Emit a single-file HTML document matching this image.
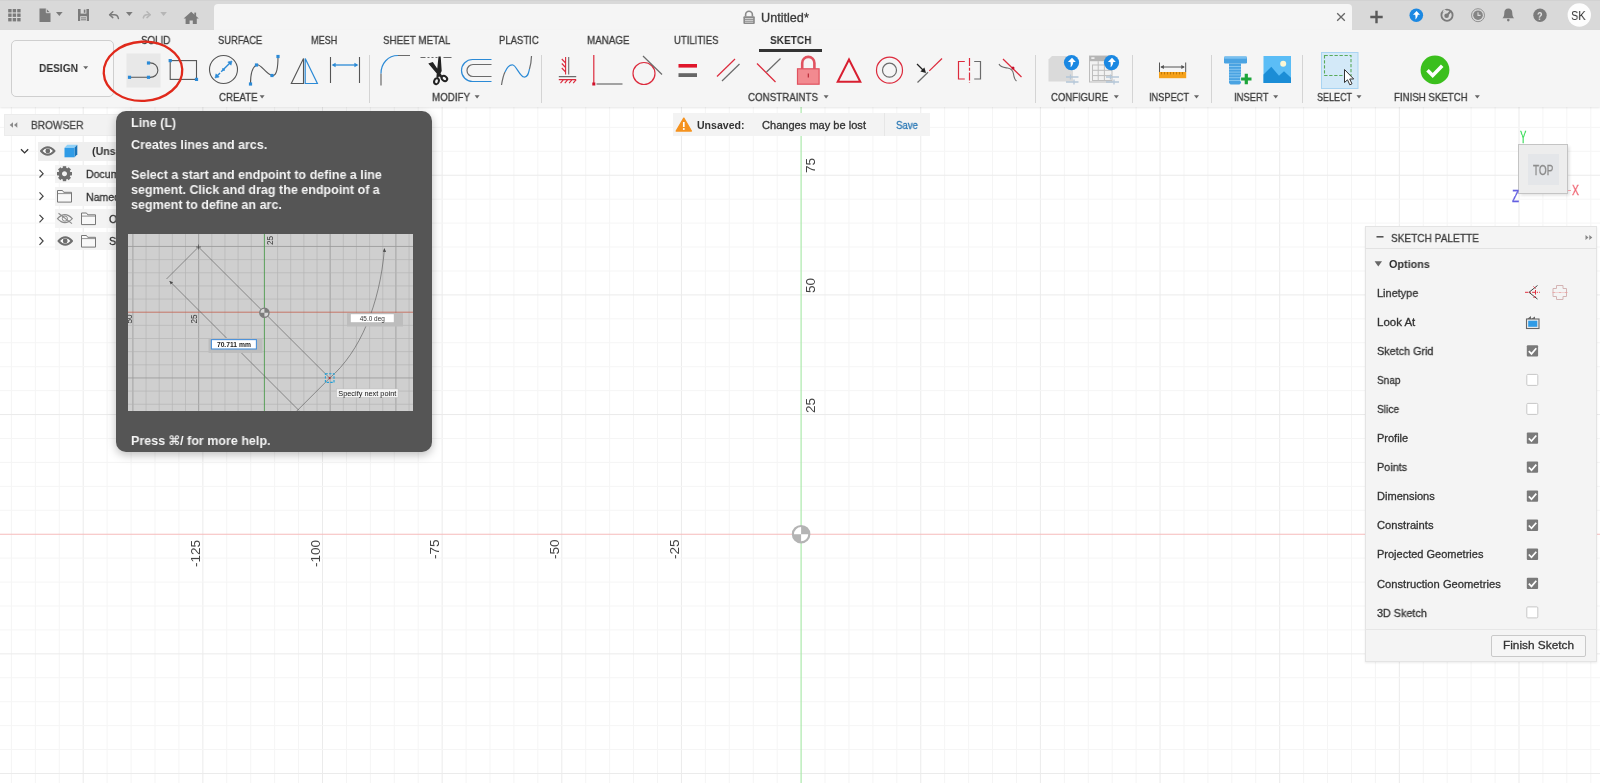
<!DOCTYPE html>
<html lang="en">
<head>
<meta charset="utf-8">
<title>Untitled*</title>
<style>
*{box-sizing:border-box;margin:0;padding:0}
html,body{width:1600px;height:783px;overflow:hidden;background:#fff}
body{font-family:"Liberation Sans","DejaVu Sans",sans-serif;color:#3c3c3c;position:relative}
.abs{position:absolute}
.t{position:absolute;white-space:pre;line-height:1;transform-origin:0 50%;display:block;will-change:transform}
#topbar{position:absolute;left:0;top:0;width:1600px;height:30px;background:#d9d9d9;border-top:1.5px solid #d2d2d2}
#doctab{position:absolute;left:214px;top:4px;width:1138px;height:27px;background:#f5f5f5;border-radius:4px 4px 0 0}
#toolbar{position:absolute;left:0;top:30px;width:1600px;height:77px;background:#f5f5f5;box-shadow:0 1px 2px rgba(0,0,0,0.10)}
#canvas{position:absolute;left:0;top:0;width:1600px;height:783px;background:#fff;overflow:hidden}
.sep{position:absolute;top:55px;width:1px;height:48px;background:#d4d4d4}
.rot{will-change:transform;position:absolute;white-space:pre;line-height:1;font-size:13.5px;color:#444;transform-origin:0 0;transform:rotate(-90deg)}
</style>
</head>
<body>

<div id="canvas">
<svg class="abs" style="left:0;top:0" width="1600" height="783" shape-rendering="auto">
<g stroke-width="1" fill="none">
<line x1="11.41" y1="107" x2="11.41" y2="783" stroke="#f5f5f5"/>
<line x1="35.34" y1="107" x2="35.34" y2="783" stroke="#f5f5f5"/>
<line x1="59.27" y1="107" x2="59.27" y2="783" stroke="#f5f5f5"/>
<line x1="83.20" y1="107" x2="83.20" y2="783" stroke="#ebebeb"/>
<line x1="107.13" y1="107" x2="107.13" y2="783" stroke="#f5f5f5"/>
<line x1="131.06" y1="107" x2="131.06" y2="783" stroke="#f5f5f5"/>
<line x1="154.99" y1="107" x2="154.99" y2="783" stroke="#f5f5f5"/>
<line x1="178.92" y1="107" x2="178.92" y2="783" stroke="#f5f5f5"/>
<line x1="202.85" y1="107" x2="202.85" y2="783" stroke="#ebebeb"/>
<line x1="226.78" y1="107" x2="226.78" y2="783" stroke="#f5f5f5"/>
<line x1="250.71" y1="107" x2="250.71" y2="783" stroke="#f5f5f5"/>
<line x1="274.64" y1="107" x2="274.64" y2="783" stroke="#f5f5f5"/>
<line x1="298.57" y1="107" x2="298.57" y2="783" stroke="#f5f5f5"/>
<line x1="322.50" y1="107" x2="322.50" y2="783" stroke="#ebebeb"/>
<line x1="346.43" y1="107" x2="346.43" y2="783" stroke="#f5f5f5"/>
<line x1="370.36" y1="107" x2="370.36" y2="783" stroke="#f5f5f5"/>
<line x1="394.29" y1="107" x2="394.29" y2="783" stroke="#f5f5f5"/>
<line x1="418.22" y1="107" x2="418.22" y2="783" stroke="#f5f5f5"/>
<line x1="442.15" y1="107" x2="442.15" y2="783" stroke="#ebebeb"/>
<line x1="466.08" y1="107" x2="466.08" y2="783" stroke="#f5f5f5"/>
<line x1="490.01" y1="107" x2="490.01" y2="783" stroke="#f5f5f5"/>
<line x1="513.94" y1="107" x2="513.94" y2="783" stroke="#f5f5f5"/>
<line x1="537.87" y1="107" x2="537.87" y2="783" stroke="#f5f5f5"/>
<line x1="561.80" y1="107" x2="561.80" y2="783" stroke="#ebebeb"/>
<line x1="585.73" y1="107" x2="585.73" y2="783" stroke="#f5f5f5"/>
<line x1="609.66" y1="107" x2="609.66" y2="783" stroke="#f5f5f5"/>
<line x1="633.59" y1="107" x2="633.59" y2="783" stroke="#f5f5f5"/>
<line x1="657.52" y1="107" x2="657.52" y2="783" stroke="#f5f5f5"/>
<line x1="681.45" y1="107" x2="681.45" y2="783" stroke="#ebebeb"/>
<line x1="705.38" y1="107" x2="705.38" y2="783" stroke="#f5f5f5"/>
<line x1="729.31" y1="107" x2="729.31" y2="783" stroke="#f5f5f5"/>
<line x1="753.24" y1="107" x2="753.24" y2="783" stroke="#f5f5f5"/>
<line x1="777.17" y1="107" x2="777.17" y2="783" stroke="#f5f5f5"/>
<line x1="825.03" y1="107" x2="825.03" y2="783" stroke="#f5f5f5"/>
<line x1="848.96" y1="107" x2="848.96" y2="783" stroke="#f5f5f5"/>
<line x1="872.89" y1="107" x2="872.89" y2="783" stroke="#f5f5f5"/>
<line x1="896.82" y1="107" x2="896.82" y2="783" stroke="#f5f5f5"/>
<line x1="920.75" y1="107" x2="920.75" y2="783" stroke="#ebebeb"/>
<line x1="944.68" y1="107" x2="944.68" y2="783" stroke="#f5f5f5"/>
<line x1="968.61" y1="107" x2="968.61" y2="783" stroke="#f5f5f5"/>
<line x1="992.54" y1="107" x2="992.54" y2="783" stroke="#f5f5f5"/>
<line x1="1016.47" y1="107" x2="1016.47" y2="783" stroke="#f5f5f5"/>
<line x1="1040.40" y1="107" x2="1040.40" y2="783" stroke="#ebebeb"/>
<line x1="1064.33" y1="107" x2="1064.33" y2="783" stroke="#f5f5f5"/>
<line x1="1088.26" y1="107" x2="1088.26" y2="783" stroke="#f5f5f5"/>
<line x1="1112.19" y1="107" x2="1112.19" y2="783" stroke="#f5f5f5"/>
<line x1="1136.12" y1="107" x2="1136.12" y2="783" stroke="#f5f5f5"/>
<line x1="1160.05" y1="107" x2="1160.05" y2="783" stroke="#ebebeb"/>
<line x1="1183.98" y1="107" x2="1183.98" y2="783" stroke="#f5f5f5"/>
<line x1="1207.91" y1="107" x2="1207.91" y2="783" stroke="#f5f5f5"/>
<line x1="1231.84" y1="107" x2="1231.84" y2="783" stroke="#f5f5f5"/>
<line x1="1255.77" y1="107" x2="1255.77" y2="783" stroke="#f5f5f5"/>
<line x1="1279.70" y1="107" x2="1279.70" y2="783" stroke="#ebebeb"/>
<line x1="1303.63" y1="107" x2="1303.63" y2="783" stroke="#f5f5f5"/>
<line x1="1327.56" y1="107" x2="1327.56" y2="783" stroke="#f5f5f5"/>
<line x1="1351.49" y1="107" x2="1351.49" y2="783" stroke="#f5f5f5"/>
<line x1="1375.42" y1="107" x2="1375.42" y2="783" stroke="#f5f5f5"/>
<line x1="1399.35" y1="107" x2="1399.35" y2="783" stroke="#ebebeb"/>
<line x1="1423.28" y1="107" x2="1423.28" y2="783" stroke="#f5f5f5"/>
<line x1="1447.21" y1="107" x2="1447.21" y2="783" stroke="#f5f5f5"/>
<line x1="1471.14" y1="107" x2="1471.14" y2="783" stroke="#f5f5f5"/>
<line x1="1495.07" y1="107" x2="1495.07" y2="783" stroke="#f5f5f5"/>
<line x1="1519.00" y1="107" x2="1519.00" y2="783" stroke="#ebebeb"/>
<line x1="1542.93" y1="107" x2="1542.93" y2="783" stroke="#f5f5f5"/>
<line x1="1566.86" y1="107" x2="1566.86" y2="783" stroke="#f5f5f5"/>
<line x1="1590.79" y1="107" x2="1590.79" y2="783" stroke="#f5f5f5"/>
<line x1="0" y1="127.39" x2="1600" y2="127.39" stroke="#f5f5f5"/>
<line x1="0" y1="151.32" x2="1600" y2="151.32" stroke="#f5f5f5"/>
<line x1="0" y1="175.25" x2="1600" y2="175.25" stroke="#ebebeb"/>
<line x1="0" y1="199.18" x2="1600" y2="199.18" stroke="#f5f5f5"/>
<line x1="0" y1="223.11" x2="1600" y2="223.11" stroke="#f5f5f5"/>
<line x1="0" y1="247.04" x2="1600" y2="247.04" stroke="#f5f5f5"/>
<line x1="0" y1="270.97" x2="1600" y2="270.97" stroke="#f5f5f5"/>
<line x1="0" y1="294.90" x2="1600" y2="294.90" stroke="#ebebeb"/>
<line x1="0" y1="318.83" x2="1600" y2="318.83" stroke="#f5f5f5"/>
<line x1="0" y1="342.76" x2="1600" y2="342.76" stroke="#f5f5f5"/>
<line x1="0" y1="366.69" x2="1600" y2="366.69" stroke="#f5f5f5"/>
<line x1="0" y1="390.62" x2="1600" y2="390.62" stroke="#f5f5f5"/>
<line x1="0" y1="414.55" x2="1600" y2="414.55" stroke="#ebebeb"/>
<line x1="0" y1="438.48" x2="1600" y2="438.48" stroke="#f5f5f5"/>
<line x1="0" y1="462.41" x2="1600" y2="462.41" stroke="#f5f5f5"/>
<line x1="0" y1="486.34" x2="1600" y2="486.34" stroke="#f5f5f5"/>
<line x1="0" y1="510.27" x2="1600" y2="510.27" stroke="#f5f5f5"/>
<line x1="0" y1="558.13" x2="1600" y2="558.13" stroke="#f5f5f5"/>
<line x1="0" y1="582.06" x2="1600" y2="582.06" stroke="#f5f5f5"/>
<line x1="0" y1="605.99" x2="1600" y2="605.99" stroke="#f5f5f5"/>
<line x1="0" y1="629.92" x2="1600" y2="629.92" stroke="#f5f5f5"/>
<line x1="0" y1="653.85" x2="1600" y2="653.85" stroke="#ebebeb"/>
<line x1="0" y1="677.78" x2="1600" y2="677.78" stroke="#f5f5f5"/>
<line x1="0" y1="701.71" x2="1600" y2="701.71" stroke="#f5f5f5"/>
<line x1="0" y1="725.64" x2="1600" y2="725.64" stroke="#f5f5f5"/>
<line x1="0" y1="749.57" x2="1600" y2="749.57" stroke="#f5f5f5"/>
<line x1="0" y1="773.50" x2="1600" y2="773.50" stroke="#ebebeb"/>
<line x1="0" y1="534.20" x2="1600" y2="534.20" stroke="#f6bbbb" stroke-width="1.1"/>
<line x1="801.10" y1="107" x2="801.10" y2="783" stroke="#abe9ab" stroke-width="1.2"/>
</g>
<g>
<circle cx="801.10" cy="534.20" r="8.2" fill="#fff" stroke="#b4b4b4" stroke-width="2.2"/>
<path d="M801.10 534.20 v-8.2 a8.2 8.2 0 0 1 8.2 8.2z M801.10 534.20 v8.2 a8.2 8.2 0 0 1 -8.2 -8.2z" fill="#b4b4b4"/>
</g>
</svg>
<span class="rot" style="left:803.9px;top:412.6px">25</span>
<span class="rot" style="left:803.9px;top:292.9px">50</span>
<span class="rot" style="left:803.9px;top:173.3px">75</span>
<span class="rot" style="left:667.5px;top:559.3px">-25</span>
<span class="rot" style="left:547.9px;top:559.3px">-50</span>
<span class="rot" style="left:428.2px;top:559.3px">-75</span>
<span class="rot" style="left:308.6px;top:566.8px">-100</span>
<span class="rot" style="left:188.9px;top:566.8px">-125</span>
</div>

<div class="abs" style="left:4px;top:113.500px;width:140px;height:22.800px;background:#f2f2f2;border:1px solid #ececec"></div>
<span class="t" style="left:30.6px;top:120.3px;font-size:11px;color:#444;-webkit-text-stroke:0.3px #444;transform:scaleX(0.922);">BROWSER</span><div class="abs" style="left:38px;top:142px;width:100px;height:18.500px;background:#efefef"></div>
<div class="abs" style="left:55px;top:164.5px;width:80px;height:18.500px;background:#f3f3f3"></div>
<div class="abs" style="left:55px;top:187.0px;width:80px;height:18.500px;background:#f3f3f3"></div>
<div class="abs" style="left:55px;top:209.4px;width:80px;height:18.500px;background:#f3f3f3"></div>
<div class="abs" style="left:55px;top:231.8px;width:80px;height:18.500px;background:#f3f3f3"></div>
<span class="t" style="left:92.2px;top:146.3px;font-size:11px;font-weight:700;color:#333;transform:scaleX(0.97);">(Unsaved)</span><span class="t" style="left:86.0px;top:169.0px;font-size:11px;color:#333;-webkit-text-stroke:0.3px #333;transform:scaleX(0.96);">Document Settings</span><span class="t" style="left:86.0px;top:191.5px;font-size:11px;color:#333;-webkit-text-stroke:0.3px #333;transform:scaleX(0.96);">Named Views</span><span class="t" style="left:109.0px;top:213.9px;font-size:11px;color:#333;-webkit-text-stroke:0.3px #333;transform:scaleX(0.96);">Origin</span><span class="t" style="left:109.0px;top:236.3px;font-size:11px;color:#333;-webkit-text-stroke:0.3px #333;transform:scaleX(0.96);">Sketches</span><svg class="abs" style="left:0;top:108px" width="150" height="150" viewBox="0 108 150 150">
<path d="M13 122.300v5.400l-3.300-2.700zM17.300 122.300v5.400l-3.300-2.700z" fill="#8a8a8a"/><path d="M21 149.300l3.600 3.600 3.600-3.600" fill="none" stroke="#333" stroke-width="1.300"/><path d="M41.0 151.0q6.750 -7.600 13.500 0q-6.750 7.600 -13.500 0z" fill="#fff" stroke="#6e6e6e" stroke-width="2" stroke-linejoin="round"/><circle cx="47.8" cy="151.0" r="2.400" fill="#6e6e6e"/><path d="M64.500 147.800l2.800-3h10l-2.800 3z" fill="#8ed0f7"/><path d="M74.500 147.800l2.800-3v9.500l-2.800 3z" fill="#1873b8"/><rect x="64.500" y="147.800" width="10" height="9.500" fill="#2f9be6"/><path d="M39.5 169.9l3.600 3.800-3.600 3.800" fill="none" stroke="#444" stroke-width="1.200"/><g transform="translate(64.500 173.700)"><circle r="4.300" fill="none" stroke="#6e6e6e" stroke-width="3.600"/><rect x="-1.700" y="-7.500" width="3.400" height="3" fill="#6e6e6e" transform="rotate(0)"/><rect x="-1.700" y="-7.500" width="3.400" height="3" fill="#6e6e6e" transform="rotate(45)"/><rect x="-1.700" y="-7.500" width="3.400" height="3" fill="#6e6e6e" transform="rotate(90)"/><rect x="-1.700" y="-7.500" width="3.400" height="3" fill="#6e6e6e" transform="rotate(135)"/><rect x="-1.700" y="-7.500" width="3.400" height="3" fill="#6e6e6e" transform="rotate(180)"/><rect x="-1.700" y="-7.500" width="3.400" height="3" fill="#6e6e6e" transform="rotate(225)"/><rect x="-1.700" y="-7.500" width="3.400" height="3" fill="#6e6e6e" transform="rotate(270)"/><rect x="-1.700" y="-7.500" width="3.400" height="3" fill="#6e6e6e" transform="rotate(315)"/></g><path d="M39.5 192.4l3.600 3.800-3.600 3.800" fill="none" stroke="#444" stroke-width="1.200"/><path d="M57.5 190.5h5l1.200 1.800h7.800v9.800h-14z" fill="#f8f8f8" stroke="#777" stroke-width="1"/><path d="M57.5 193.6h14" stroke="#777" stroke-width="0.800"/><path d="M39.5 214.8l3.600 3.800-3.600 3.800" fill="none" stroke="#444" stroke-width="1.200"/><path d="M81.5 213.0h5l1.200 1.800h7.800v9.800h-14z" fill="#f8f8f8" stroke="#777" stroke-width="1"/><path d="M81.5 216.1h14" stroke="#777" stroke-width="0.800"/><path d="M39.5 237.2l3.600 3.800-3.600 3.800" fill="none" stroke="#444" stroke-width="1.200"/><path d="M81.5 235.5h5l1.200 1.800h7.800v9.800h-14z" fill="#f8f8f8" stroke="#777" stroke-width="1"/><path d="M81.5 238.6h14" stroke="#777" stroke-width="0.800"/><path d="M57.500 218.600q7.400 -8 14.800 0q-7.400 8 -14.800 0z" fill="none" stroke="#8a8a8a" stroke-width="1.100"/><circle cx="64.900" cy="218.600" r="2.600" fill="none" stroke="#8a8a8a" stroke-width="1"/><path d="M58.500 213.200l13.500 10.400" stroke="#8a8a8a" stroke-width="1.100"/><path d="M58.5 241.0q6.750 -7.600 13.500 0q-6.750 7.600 -13.500 0z" fill="#fff" stroke="#6e6e6e" stroke-width="2" stroke-linejoin="round"/><circle cx="65.2" cy="241.0" r="2.400" fill="#6e6e6e"/></svg>

<div class="abs" style="left:116px;top:111px;width:315.500px;height:340.500px;background:#555555;border-radius:10px;box-shadow:0 3px 10px rgba(0,0,0,0.26)"></div>
<span class="t" style="left:131.2px;top:116.3px;font-size:13px;font-weight:700;color:#f4f4f4;transform:scaleX(0.962);">Line (L)</span><span class="t" style="left:131.2px;top:138.3px;font-size:13px;font-weight:700;color:#f4f4f4;transform:scaleX(0.962);">Creates lines and arcs.</span><span class="t" style="left:131.2px;top:168.2px;font-size:13px;font-weight:700;color:#f4f4f4;transform:scaleX(0.962);">Select a start and endpoint to define a line</span><span class="t" style="left:131.2px;top:183.2px;font-size:13px;font-weight:700;color:#f4f4f4;transform:scaleX(0.962);">segment. Click and drag the endpoint of a</span><span class="t" style="left:131.2px;top:198.1px;font-size:13px;font-weight:700;color:#f4f4f4;transform:scaleX(0.962);">segment to define an arc.</span><span class="t" style="left:131.2px;top:434.3px;font-size:13px;font-weight:700;color:#f4f4f4;transform:scaleX(0.962);">Press ⌘/ for more help.</span><svg class="abs" style="will-change:transform;left:127.5px;top:234px" width="285" height="177" viewBox="0 0 285 177"><rect width="285" height="177" fill="#cfcfcf"/><path d="M4.90 0V177" stroke="#999999" stroke-width="0.85"/><path d="M18.05 0V177" stroke="#b3b3b3" stroke-width="0.65"/><path d="M31.20 0V177" stroke="#b3b3b3" stroke-width="0.65"/><path d="M44.35 0V177" stroke="#b3b3b3" stroke-width="0.65"/><path d="M57.50 0V177" stroke="#b3b3b3" stroke-width="0.65"/><path d="M70.65 0V177" stroke="#999999" stroke-width="0.85"/><path d="M83.80 0V177" stroke="#b3b3b3" stroke-width="0.65"/><path d="M96.95 0V177" stroke="#b3b3b3" stroke-width="0.65"/><path d="M110.10 0V177" stroke="#b3b3b3" stroke-width="0.65"/><path d="M123.25 0V177" stroke="#b3b3b3" stroke-width="0.65"/><path d="M149.55 0V177" stroke="#b3b3b3" stroke-width="0.65"/><path d="M162.70 0V177" stroke="#b3b3b3" stroke-width="0.65"/><path d="M175.85 0V177" stroke="#b3b3b3" stroke-width="0.65"/><path d="M189.00 0V177" stroke="#b3b3b3" stroke-width="0.65"/><path d="M202.15 0V177" stroke="#999999" stroke-width="0.85"/><path d="M215.30 0V177" stroke="#b3b3b3" stroke-width="0.65"/><path d="M228.45 0V177" stroke="#b3b3b3" stroke-width="0.65"/><path d="M241.60 0V177" stroke="#b3b3b3" stroke-width="0.65"/><path d="M254.75 0V177" stroke="#b3b3b3" stroke-width="0.65"/><path d="M267.90 0V177" stroke="#999999" stroke-width="0.85"/><path d="M281.05 0V177" stroke="#b3b3b3" stroke-width="0.65"/><path d="M0 12.45H285" stroke="#999999" stroke-width="0.85"/><path d="M0 25.60H285" stroke="#b3b3b3" stroke-width="0.65"/><path d="M0 38.75H285" stroke="#b3b3b3" stroke-width="0.65"/><path d="M0 51.90H285" stroke="#b3b3b3" stroke-width="0.65"/><path d="M0 65.05H285" stroke="#b3b3b3" stroke-width="0.65"/><path d="M0 91.35H285" stroke="#b3b3b3" stroke-width="0.65"/><path d="M0 104.50H285" stroke="#b3b3b3" stroke-width="0.65"/><path d="M0 117.65H285" stroke="#b3b3b3" stroke-width="0.65"/><path d="M0 130.80H285" stroke="#b3b3b3" stroke-width="0.65"/><path d="M0 143.95H285" stroke="#999999" stroke-width="0.85"/><path d="M0 157.10H285" stroke="#b3b3b3" stroke-width="0.65"/><path d="M0 170.25H285" stroke="#b3b3b3" stroke-width="0.65"/><path d="M0 78.20H285" stroke="#c4604c" stroke-width="0.800"/><path d="M136.40 0V177" stroke="#4d9a4d" stroke-width="0.900"/>
<g fill="none" stroke="#555" stroke-width="0.600">
<path d="M70.500 13L201.700 144.100"/>
<path d="M70.500 13L38.500 45M201.700 144.100L168 177.800"/>
<path d="M41.500 47L171 176.500"/>
<path d="M201.700 144.100C232 118 252 70 256.400 15"/>
</g>
<path d="M70.500 10.500v5M68 13h5" stroke="#4a4a4a" stroke-width="0.700"/>
<path d="M41.500 47l1.200 3.600 2.400-2.400zM256.400 14l-1.500 3.800 3.200.2z" fill="#4a4a4a"/>
<circle cx="136.400" cy="78.700" r="4.600" fill="#d8d8d8" stroke="#7c7c7c" stroke-width="1.400"/>
<path d="M136.400 78.700v-4.600a4.600 4.600 0 0 1 4.600 4.600zM136.400 78.700v4.600a4.600 4.600 0 0 1 -4.600 -4.600z" fill="#7c7c7c"/>
<rect x="197.400" y="139.800" width="8.600" height="8.600" fill="none" stroke="#1fa0d8" stroke-width="1.100" stroke-dasharray="2.400 1.300"/>
<circle cx="201.700" cy="144.100" r="1.100" fill="#b03030"/>
<!-- dimension boxes -->
<rect x="80.500" y="104" width="54" height="15" fill="#bdbdbd"/>
<rect x="83.400" y="105.600" width="45" height="9.400" fill="#fff" stroke="#4a90d9" stroke-width="1.100"/>
<rect x="219" y="79" width="56" height="13.500" fill="#bdbdbd"/>
<rect x="222.800" y="80.200" width="43" height="8" fill="#fff"/>
<rect x="208.600" y="154.900" width="61.500" height="8.600" fill="#f4f4f4" stroke="#bbb" stroke-width="0.500"/>
<text x="105.900" y="113.300" font-family="Liberation Sans, sans-serif" font-size="7.200" font-weight="700" fill="#222" text-anchor="middle" textLength="34" lengthAdjust="spacingAndGlyphs">70.711 mm</text>
<text x="244.300" y="87" font-family="Liberation Sans, sans-serif" font-size="6.800" fill="#333" text-anchor="middle" textLength="25" lengthAdjust="spacingAndGlyphs">45.0 deg</text>
<text x="239.300" y="162" font-family="Liberation Sans, sans-serif" font-size="7.600" fill="#111" text-anchor="middle" textLength="58" lengthAdjust="spacingAndGlyphs">Specify next point</text>
<g font-family="Liberation Sans, sans-serif" font-size="8.200" fill="#333">
<text transform="translate(144.800 11) rotate(-90)">25</text>
<text transform="translate(69 89.500) rotate(-90)">25</text>
<text transform="translate(4 89.500) rotate(-90)">50</text>
</g>
</svg>

<div class="abs" style="left:673px;top:113.400px;width:257.400px;height:22.300px;background:#f3f3f3"></div>
<div class="abs" style="left:884px;top:113.400px;width:1px;height:22.300px;background:#e6e6e6"></div>
<svg class="abs" style="left:674px;top:116px" width="20" height="17" viewBox="674 116 20 17"><path d="M683.800 118.200l7.600 12.800h-15.200z" fill="#f5921e" stroke="#f5921e" stroke-width="1.400" stroke-linejoin="round"/><path d="M683.800 122v5" stroke="#fff" stroke-width="1.700"/><circle cx="683.800" cy="129.100" r="1" fill="#fff"/></svg>
<span class="t" style="left:696.5px;top:120.0px;font-size:10.5px;font-weight:700;color:#333;transform:scaleX(1.005);">Unsaved:</span><span class="t" style="left:762.0px;top:120.0px;font-size:10.5px;color:#333;-webkit-text-stroke:0.3px #333;transform:scaleX(1.054);">Changes may be lost</span><span class="t" style="left:896.0px;top:120.0px;font-size:10.5px;color:#2a78b5;-webkit-text-stroke:0.3px #2a78b5;transform:scaleX(0.919);">Save</span><div class="abs" style="left:1518.300px;top:144.300px;width:49.600px;height:49.300px;background:#ededed;border:1px solid #c4c4c4;box-shadow:1.500px 1.500px 3px rgba(0,0,0,0.12)"></div>
<div class="abs" style="left:1528px;top:153.500px;width:31px;height:31.500px;background:#e4e6e9"></div>
<span class="t" style="left:1533.0px;top:163.0px;font-size:14px;color:#8c8c8c;-webkit-text-stroke:0.3px #8c8c8c;transform:scaleX(0.712);">TOP</span><span class="t" style="left:1519.5px;top:128.5px;font-size:16.5px;color:#3fdc5e;-webkit-text-stroke:0.3px #3fdc5e;transform:scaleX(0.572);">Y</span><span class="t" style="left:1572.2px;top:184.0px;font-size:13.8px;color:#ef6472;-webkit-text-stroke:0.3px #ef6472;transform:scaleX(0.750);">X</span><span class="t" style="left:1512.4px;top:188.0px;font-size:16.5px;color:#6460e0;-webkit-text-stroke:0.3px #6460e0;transform:scaleX(0.703);">Z</span><div class="abs" style="left:1568px;top:189.500px;width:2.500px;height:1.200px;background:#f0a0a8"></div>
<div class="abs" style="left:1365.400px;top:226.200px;width:232px;height:436px;background:#f4f4f4;border:1px solid #e4e4e4;box-shadow:0 1px 2px rgba(0,0,0,0.08)"></div>
<div class="abs" style="left:1365.400px;top:248.200px;width:232px;height:1px;background:#e2e2e2"></div>
<div class="abs" style="left:1365.400px;top:628.500px;width:232px;height:1px;background:#e6e6e6"></div>
<span class="t" style="left:1391.4px;top:232.8px;font-size:11.5px;color:#3c3c3c;-webkit-text-stroke:0.3px #3c3c3c;transform:scaleX(0.877);">SKETCH PALETTE</span><span class="t" style="left:1388.7px;top:258.8px;font-size:11px;font-weight:700;color:#2e2e2e;transform:scaleX(0.982);">Options</span><span class="t" style="left:1377.2px;top:287.9px;font-size:11px;color:#333;-webkit-text-stroke:0.3px #333;transform:scaleX(0.993);">Linetype</span><span class="t" style="left:1377.2px;top:316.9px;font-size:11px;color:#333;-webkit-text-stroke:0.3px #333;transform:scaleX(1.044);">Look At</span><span class="t" style="left:1377.2px;top:346.0px;font-size:11px;color:#333;-webkit-text-stroke:0.3px #333;transform:scaleX(0.983);">Sketch Grid</span><span class="t" style="left:1377.2px;top:375.1px;font-size:11px;color:#333;-webkit-text-stroke:0.3px #333;transform:scaleX(0.914);">Snap</span><span class="t" style="left:1377.2px;top:404.1px;font-size:11px;color:#333;-webkit-text-stroke:0.3px #333;transform:scaleX(0.927);">Slice</span><span class="t" style="left:1377.2px;top:433.2px;font-size:11px;color:#333;-webkit-text-stroke:0.3px #333;">Profile</span><span class="t" style="left:1377.2px;top:462.2px;font-size:11px;color:#333;-webkit-text-stroke:0.3px #333;transform:scaleX(0.984);">Points</span><span class="t" style="left:1377.2px;top:491.3px;font-size:11px;color:#333;-webkit-text-stroke:0.3px #333;transform:scaleX(1.006);">Dimensions</span><span class="t" style="left:1377.2px;top:520.4px;font-size:11px;color:#333;-webkit-text-stroke:0.3px #333;transform:scaleX(1.015);">Constraints</span><span class="t" style="left:1377.2px;top:549.4px;font-size:11px;color:#333;-webkit-text-stroke:0.3px #333;">Projected Geometries</span><span class="t" style="left:1377.2px;top:578.5px;font-size:11px;color:#333;-webkit-text-stroke:0.3px #333;transform:scaleX(1.017);">Construction Geometries</span><span class="t" style="left:1377.2px;top:607.5px;font-size:11px;color:#333;-webkit-text-stroke:0.3px #333;transform:scaleX(0.981);">3D Sketch</span><svg class="abs" style="left:1365px;top:226px" width="234" height="436" viewBox="1365 226 234 436">
<path d="M1376.500 236.800h7" stroke="#555" stroke-width="1.600"/><path d="M1585.500 235v5l3-2.500zM1589.300 235v5l3-2.500z" fill="#888"/><path d="M1374.600 261.300h7.400l-3.700 5.200z" fill="#666"/><rect x="1526.800" y="345.2" width="11.300" height="11.300" rx="1" fill="#7a7a7a"/><path d="M1528.800 351.1l2.700 2.800 4.800-5.600" fill="none" stroke="#fff" stroke-width="1.700"/><rect x="1526.800" y="374.4" width="11" height="11" rx="1" fill="#fff" stroke="#c6c6c6" stroke-width="1"/><rect x="1526.800" y="403.4" width="11" height="11" rx="1" fill="#fff" stroke="#c6c6c6" stroke-width="1"/><rect x="1526.800" y="432.4" width="11.300" height="11.300" rx="1" fill="#7a7a7a"/><path d="M1528.800 438.3l2.700 2.800 4.800-5.600" fill="none" stroke="#fff" stroke-width="1.700"/><rect x="1526.800" y="461.5" width="11.300" height="11.300" rx="1" fill="#7a7a7a"/><path d="M1528.800 467.4l2.700 2.800 4.800-5.600" fill="none" stroke="#fff" stroke-width="1.700"/><rect x="1526.800" y="490.5" width="11.300" height="11.300" rx="1" fill="#7a7a7a"/><path d="M1528.800 496.4l2.700 2.800 4.800-5.600" fill="none" stroke="#fff" stroke-width="1.700"/><rect x="1526.800" y="519.6" width="11.300" height="11.300" rx="1" fill="#7a7a7a"/><path d="M1528.800 525.5l2.700 2.800 4.800-5.600" fill="none" stroke="#fff" stroke-width="1.700"/><rect x="1526.800" y="548.6" width="11.300" height="11.300" rx="1" fill="#7a7a7a"/><path d="M1528.800 554.5l2.700 2.800 4.800-5.600" fill="none" stroke="#fff" stroke-width="1.700"/><rect x="1526.800" y="577.7" width="11.300" height="11.300" rx="1" fill="#7a7a7a"/><path d="M1528.800 583.6l2.700 2.800 4.800-5.600" fill="none" stroke="#fff" stroke-width="1.700"/><rect x="1526.800" y="606.9" width="11" height="11" rx="1" fill="#fff" stroke="#c6c6c6" stroke-width="1"/><g fill="none" stroke-width="1">
<path d="M1537.500 285.500l-8.500 6.800 8.500 6.800" stroke="#444"/>
<path d="M1525 292.300h15" stroke="#e0303f" stroke-dasharray="3.500 1.200 1.200 1.200"/>
<path d="M1533.500 286.500l2 2M1533.500 298l2-2M1535.500 290v4.600" stroke="#e0303f"/>
<path d="M1556.500 285.500h6.500v3h3.500v8h-3.500v3h-6.500v-3h-3.500v-8h3.500z" stroke="#d4b4b4" stroke-linejoin="round"/>
<path d="M1552.500 292.500h15" stroke="#e8a0a0" stroke-width="0.800" stroke-dasharray="3 1 1 1"/>
</g>
<path d="M1526.500 319.500l4.500-3.500v3l4-2.500v3z" fill="#666"/>
<rect x="1526.500" y="319" width="12.500" height="9.500" fill="#eee" stroke="#666" stroke-width="1.100"/><rect x="1528.200" y="320.700" width="9.100" height="6.100" fill="#2f9be6"/>
</svg>
<div class="abs" style="left:1490.500px;top:634.500px;width:95px;height:22px;background:#f6f6f6;border:1px solid #c9c9c9;border-radius:2px"></div>
<span class="t" style="left:1502.5px;top:640.4px;font-size:11.5px;color:#333;-webkit-text-stroke:0.3px #333;transform:scaleX(1.029);">Finish Sketch</span>
<div id="topbar"></div>
<div id="doctab"></div>
<div id="toolbar"></div>
<svg class="abs" style="left:0;top:0" width="1600" height="32">
<!-- app grid -->
<g fill="#7b7b7b">
<rect x="8.2" y="9.0" width="3.4" height="3.4"/><rect x="12.7" y="9.0" width="3.4" height="3.4"/><rect x="17.2" y="9.0" width="3.4" height="3.4"/><rect x="8.2" y="13.5" width="3.4" height="3.4"/><rect x="12.7" y="13.5" width="3.4" height="3.4"/><rect x="17.2" y="13.5" width="3.4" height="3.4"/><rect x="8.2" y="18.0" width="3.4" height="3.4"/><rect x="12.7" y="18.0" width="3.4" height="3.4"/><rect x="17.2" y="18.0" width="3.4" height="3.4"/>
</g>
<!-- file -->
<path d="M39.5 8.5h6.5l4.5 4.5v9h-11z" fill="#7b7b7b"/><path d="M46.3 8.5v4.2h4.2" fill="none" stroke="#d9d9d9" stroke-width="1"/>
<path d="M56 12h6.6l-3.3 4z" fill="#7b7b7b"/>
<!-- save -->
<path d="M78 9h11v12h-11z" fill="#7b7b7b"/><rect x="80.6" y="9" width="5.8" height="4.6" fill="#d9d9d9"/><rect x="83.8" y="9.6" width="1.6" height="3.2" fill="#7b7b7b"/><rect x="80.2" y="16.2" width="6.6" height="4.8" fill="#d9d9d9"/><rect x="81" y="17.4" width="5" height="1" fill="#7b7b7b"/><rect x="81" y="19.3" width="5" height="1" fill="#7b7b7b"/>
<!-- undo -->
<path d="M112.8 11.800l-3.200 2.900 3.200 2.900" fill="none" stroke="#7b7b7b" stroke-width="1.500" stroke-linejoin="round" stroke-linecap="round"/>
<path d="M110 14.700h4.200c2.400 0 3.800 1.400 4.200 3.800" fill="none" stroke="#7b7b7b" stroke-width="1.500" stroke-linecap="round"/>
<path d="M126 12h6.6l-3.3 4z" fill="#7b7b7b"/>
<!-- redo -->
<g opacity="0.55">
<path d="M147 11.800l3.200 2.900-3.200 2.900" fill="none" stroke="#999" stroke-width="1.500" stroke-linejoin="round" stroke-linecap="round"/>
<path d="M150 14.700h-3.200c-2.200 0-3.200 1.200-3.500 3.200" fill="none" stroke="#999" stroke-width="1.500" stroke-linecap="round"/>
<path d="M160.3 12h6.6l-3.3 4z" fill="#999"/>
</g>
<!-- home -->
<path d="M183.6 18.6l7.6-6.8 7.6 6.8h-2v5.4h-4v-3.6h-3.2v3.6h-4v-5.4z" fill="#7b7b7b"/><rect x="194.3" y="12.6" width="1.8" height="3.5" fill="#7b7b7b"/>
<!-- lock -->
<path d="M745.6 16.5v-1.8a3.4 3.4 0 0 1 6.8 0v1.8" fill="none" stroke="#8a8a8a" stroke-width="1.6"/>
<rect x="743.4" y="16.2" width="11.4" height="7.8" rx="1" fill="#8a8a8a"/>
<path d="M745 18.6h8.2M745 20.4h8.2M745 22.2h8.2" stroke="#f5f5f5" stroke-width="0.7"/>
<!-- close x -->
<path d="M1337.2 13.2l7.6 7.6M1344.8 13.2l-7.6 7.6" stroke="#666" stroke-width="1.3"/>
<!-- plus -->
<path d="M1370.3 17h12.4M1376.5 10.8v12.4" stroke="#5a5a5a" stroke-width="2.4"/>
<!-- blue job status -->
<circle cx="1416.3" cy="15.2" r="6.8" fill="#1b88e2"/>
<path d="M1416.6 11l3.4 3.8h-2.2c-.2 2-.9 3.4-2.4 4.6.3-1.600.2-3-.2-4.600h-2.200z" fill="#fff"/>
<!-- gauge -->
<circle cx="1447" cy="15.200" r="5.600" fill="none" stroke="#7b7b7b" stroke-width="1.800"/>
<path d="M1447 15.400l3.200-3.800" stroke="#7b7b7b" stroke-width="2" stroke-linecap="round"/><circle cx="1446.600" cy="15.800" r="2.300" fill="#7b7b7b"/>
<path d="M1442.500 12.500l1.500-3.500 2.500 1.500z" fill="#d9d9d9"/>
<!-- clock -->
<circle cx="1478" cy="15.200" r="6.500" fill="none" stroke="#8a8a8a" stroke-width="0.900"/>
<circle cx="1478" cy="15.200" r="4.800" fill="#858585"/>
<path d="M1478 12.200v3.200h2.600" fill="none" stroke="#d9d9d9" stroke-width="1.100"/>
<!-- bell -->
<path d="M1508.300 8.600c2.600 0 4 1.900 4 4.300 0 2.900.800 4.200 1.900 5.300h-11.800c1.100-1.100 1.900-2.400 1.900-5.300 0-2.400 1.400-4.300 4-4.300z" fill="#7b7b7b"/>
<circle cx="1508.300" cy="20.100" r="1.300" fill="#7b7b7b"/>
<!-- help -->
<circle cx="1540" cy="15.200" r="6.700" fill="#7b7b7b"/>
<!-- avatar -->
<circle cx="1579.300" cy="15" r="11.700" fill="#fdfdfd"/>
</svg>
<span class="t" style="left:1537.4px;top:10.5px;font-size:11px;font-weight:700;color:#e6e6e6;transform:scaleX(0.802);">?</span><span class="t" style="left:1571.3px;top:9.6px;font-size:12px;color:#333;transform:scaleX(0.912);nostroke;">SK</span><span class="t" style="left:761.0px;top:12.3px;font-size:12.5px;color:#3a3a3a;-webkit-text-stroke:0.3px #3a3a3a;transform:scaleX(1.012);">Untitled*</span>
<span class="t" style="left:140.6px;top:35.1px;font-size:11px;color:#3a3a3a;-webkit-text-stroke:0.3px #3a3a3a;transform:scaleX(0.890);">SOLID</span><span class="t" style="left:218.2px;top:35.1px;font-size:11px;color:#3a3a3a;-webkit-text-stroke:0.3px #3a3a3a;transform:scaleX(0.852);">SURFACE</span><span class="t" style="left:310.8px;top:35.1px;font-size:11px;color:#3a3a3a;-webkit-text-stroke:0.3px #3a3a3a;transform:scaleX(0.828);">MESH</span><span class="t" style="left:383.2px;top:35.1px;font-size:11px;color:#3a3a3a;-webkit-text-stroke:0.3px #3a3a3a;transform:scaleX(0.894);">SHEET METAL</span><span class="t" style="left:499.0px;top:35.1px;font-size:11px;color:#3a3a3a;-webkit-text-stroke:0.3px #3a3a3a;transform:scaleX(0.864);">PLASTIC</span><span class="t" style="left:586.5px;top:35.1px;font-size:11px;color:#3a3a3a;-webkit-text-stroke:0.3px #3a3a3a;transform:scaleX(0.891);">MANAGE</span><span class="t" style="left:673.5px;top:35.1px;font-size:11px;color:#3a3a3a;-webkit-text-stroke:0.3px #3a3a3a;transform:scaleX(0.867);">UTILITIES</span><span class="t" style="left:769.5px;top:35.1px;font-size:11px;font-weight:700;color:#2e2e2e;transform:scaleX(0.917);">SKETCH</span><div class="abs" style="left:759px;top:49px;width:62.5px;height:3px;background:#333"></div>
<div class="abs" style="left:11px;top:40px;width:102.5px;height:57px;border:1px solid #cfcfcf;border-radius:5px;background:#f7f7f7"></div>
<span class="t" style="left:38.5px;top:62.9px;font-size:11px;font-weight:700;color:#333;transform:scaleX(0.924);">DESIGN</span><span class="t" style="left:218.5px;top:92.0px;font-size:11px;color:#3a3a3a;-webkit-text-stroke:0.3px #3a3a3a;transform:scaleX(0.879);">CREATE</span><span class="t" style="left:431.5px;top:92.0px;font-size:11px;color:#3a3a3a;-webkit-text-stroke:0.3px #3a3a3a;transform:scaleX(0.888);">MODIFY</span><span class="t" style="left:748.0px;top:92.0px;font-size:11px;color:#3a3a3a;-webkit-text-stroke:0.3px #3a3a3a;transform:scaleX(0.888);">CONSTRAINTS</span><span class="t" style="left:1051.0px;top:92.0px;font-size:11px;color:#3a3a3a;-webkit-text-stroke:0.3px #3a3a3a;transform:scaleX(0.864);">CONFIGURE</span><span class="t" style="left:1148.5px;top:92.0px;font-size:11px;color:#3a3a3a;-webkit-text-stroke:0.3px #3a3a3a;transform:scaleX(0.839);">INSPECT</span><span class="t" style="left:1233.5px;top:92.0px;font-size:11px;color:#3a3a3a;-webkit-text-stroke:0.3px #3a3a3a;transform:scaleX(0.859);">INSERT</span><span class="t" style="left:1317.0px;top:92.0px;font-size:11px;color:#3a3a3a;-webkit-text-stroke:0.3px #3a3a3a;transform:scaleX(0.818);">SELECT</span><span class="t" style="left:1393.7px;top:92.0px;font-size:11px;color:#3a3a3a;-webkit-text-stroke:0.3px #3a3a3a;transform:scaleX(0.881);">FINISH SKETCH</span><div class="sep" style="left:369.0px"></div><div class="sep" style="left:541.0px"></div><div class="sep" style="left:1034.5px"></div><div class="sep" style="left:1132.0px"></div><div class="sep" style="left:1210.7px"></div><div class="sep" style="left:1302.0px"></div>
<svg class="abs" style="left:0;top:30px" width="1600" height="78" viewBox="0 30 1600 78">
<path d="M259.6 95.3h5l-2.5 3.1z" fill="#666"/><path d="M474.6 95.3h5l-2.5 3.1z" fill="#666"/><path d="M823.6 95.3h5l-2.5 3.1z" fill="#666"/><path d="M1113.8 95.3h5l-2.5 3.1z" fill="#666"/><path d="M1194.0 95.3h5l-2.5 3.1z" fill="#666"/><path d="M1273.2 95.3h5l-2.5 3.1z" fill="#666"/><path d="M1356.5 95.3h5l-2.5 3.1z" fill="#666"/><path d="M1474.8 95.3h5l-2.5 3.1z" fill="#666"/><path d="M83.2 66.2h5l-2.5 3.1z" fill="#666"/>
<!-- selected bg -->
<rect x="126.500" y="53.500" width="34" height="34" fill="#e8e8e8"/>
<!-- line -->
<g fill="none" stroke="#555" stroke-width="1.100"><path d="M129.500 77.300h19M148.500 63C161 61.500 161 78.800 148.500 77.300"/></g>
<rect x="127.9" y="75.7" width="3.2" height="3.2" fill="#2b8ad6"/><rect x="146.9" y="75.7" width="3.2" height="3.2" fill="#2b8ad6"/><rect x="146.9" y="61.4" width="3.2" height="3.2" fill="#2b8ad6"/>
<!-- rect -->
<rect x="170.200" y="60.600" width="26.300" height="18.800" fill="none" stroke="#555" stroke-width="1.100"/>
<rect x="168.6" y="59.0" width="3.2" height="3.2" fill="#2b8ad6"/><rect x="194.9" y="77.8" width="3.2" height="3.2" fill="#2b8ad6"/>
<!-- circle -->
<circle cx="223.500" cy="69.500" r="14" fill="none" stroke="#555" stroke-width="1.100"/>
<path d="M216.500 76.500l14-14" stroke="#2b8ad6" stroke-width="1.400" stroke-dasharray="5 1.600 2.600 1.600 9"/>
<path d="M215 78l1-4.200 3.200 3.200zM232 61l-1 4.200-3.200-3.200z" fill="#2b8ad6" stroke="#2b8ad6" stroke-width="0.600"/>
<rect x="222.2" y="68.2" width="2.6" height="2.6" fill="#2b8ad6"/>
<!-- spline -->
<path d="M250.500 84c0-9 2-17 6-19s9 9 15.500 10.500c5 1 6-9 6-19" fill="none" stroke="#555" stroke-width="1.100"/>
<rect x="248.9" y="82.4" width="3.2" height="3.2" fill="#2b8ad6"/><rect x="254.9" y="63.4" width="3.2" height="3.2" fill="#2b8ad6"/><rect x="270.4" y="73.9" width="3.2" height="3.2" fill="#2b8ad6"/><rect x="276.4" y="54.9" width="3.2" height="3.2" fill="#2b8ad6"/>
<!-- mirror -->
<path d="M303.500 58.500v25h-12.200z" fill="none" stroke="#555" stroke-width="1.100"/>
<path d="M305.200 58.500v25h12.200z" fill="none" stroke="#2b8ad6" stroke-width="1.200"/>
<!-- dimension -->
<path d="M330.500 57v26M359.500 57v26" stroke="#555" stroke-width="1.100"/>
<path d="M333 65h24" stroke="#2b8ad6" stroke-width="1.300"/>
<path d="M331.600 65l4-2.200v4.400zM358.400 65l-4-2.200v4.400z" fill="#2b8ad6"/>
<!-- fillet -->
<path d="M381 85.500v-12M398 55.500h12" stroke="#6b6b6b" stroke-width="1.200" fill="none"/>
<path d="M381 73.500c0-10 7-18 17-18" stroke="#2b8ad6" stroke-width="1.200" fill="none"/>
<!-- trim -->
<path d="M420.500 57.500h31" stroke="#6b6b6b" stroke-width="1.100" stroke-dasharray="5 2 2 2 2 2 2 6 8"/>
<g fill="none" stroke="#222" stroke-width="2">
<ellipse cx="436.500" cy="81.200" rx="2.300" ry="3" transform="rotate(20 436.500 81.200)"/>
<ellipse cx="444.400" cy="78.500" rx="2.300" ry="3" transform="rotate(-50 444.400 78.500)"/>
</g>
<path d="M428.300 63.500l4.500-1.500 9.500 14-2 1.800zM438.500 56.500l2.200 0 1 14.500-3.800 7.500-1.500-1.500z" fill="#222"/>
<!-- offset -->
<path d="M491.500 59.500h-19a11 11 0 0 0 0 22h19" fill="none" stroke="#2b8ad6" stroke-width="1.200"/>
<path d="M491.500 64.500h-18.500a6 6 0 0 0 0 12h18.500" fill="none" stroke="#6b6b6b" stroke-width="1.200"/>
<!-- spline modify -->
<path d="M501.500 85c1-6 2-10 3.500-13M529.500 69c1.300-4 1.800-8 2-13" fill="none" stroke="#6b6b6b" stroke-width="1.200"/>
<path d="M505 72c2-4.500 5-7.500 8-7s7 11.500 11 12 4.500-4 5.500-8" fill="none" stroke="#2b8ad6" stroke-width="1.200"/>
</svg>

<svg class="abs" style="left:0;top:30px" width="1600" height="78" viewBox="0 30 1600 78">
<!-- fix/ground -->
<g fill="none" stroke-width="1.100">
<path d="M565.600 57v17.500M565.600 63l-3.800-4M565.600 67.500l-3.800-4M565.600 72l-3.800-4" stroke="#dc2a3c"/>
<path d="M568.700 57v17.500M558.800 76.600h17.400" stroke="#6b6b6b"/>
<path d="M558.800 79.600h17.400M563.500 79.600l-3 3.600M567.800 79.600l-3 3.600M572.100 79.600l-3 3.600M576.200 79.600l-3 3.600" stroke="#dc2a3c"/>
</g>
<!-- horizontal/vertical -->
<path d="M593.800 55v28.500" stroke="#dc2a3c" stroke-width="1.200"/>
<path d="M596.500 84h26" stroke="#6b6b6b" stroke-width="1.200"/>
<rect x="592.300" y="82.500" width="3" height="3" fill="#d0102a"/>
<!-- tangent -->
<circle cx="644" cy="73.500" r="11" fill="none" stroke="#dc2a3c" stroke-width="1.200"/>
<path d="M643 56l19 18.500" stroke="#6b6b6b" stroke-width="1.200"/>
<!-- equal -->
<rect x="678.500" y="64" width="18.500" height="3.600" fill="#e0162b"/>
<rect x="678.500" y="73.200" width="18.500" height="3.800" fill="#666"/>
<!-- parallel -->
<path d="M717 76.500l18-17.500" stroke="#dc2a3c" stroke-width="1.200"/>
<path d="M722 81l17.500-17" stroke="#6b6b6b" stroke-width="1.200"/>
<!-- perpendicular -->
<path d="M757 63.500l18.500 18.500" stroke="#dc2a3c" stroke-width="1.200"/>
<path d="M766.500 72l14-13.500" stroke="#6b6b6b" stroke-width="1.200"/>
<!-- lock -->
<path d="M802.200 69v-6a6.100 6.100 0 0 1 12.200 0v6" fill="none" stroke="#e0525f" stroke-width="2.600"/>
<rect x="797.500" y="68.800" width="21.600" height="15.400" fill="#f28a90" stroke="#e0525f" stroke-width="1.200"/>
<path d="M808.300 73.500v4" stroke="#b5202f" stroke-width="1.100"/>
<!-- triangle -->
<path d="M849 59.500l11.300 22.200h-22.600z" fill="none" stroke="#d81f31" stroke-width="2" stroke-linejoin="miter"/>
<!-- concentric -->
<circle cx="889.500" cy="70.200" r="13" fill="none" stroke="#dc2a3c" stroke-width="1.200"/>
<circle cx="889.500" cy="70.200" r="7" fill="none" stroke="#6b6b6b" stroke-width="1.200"/>
<!-- midpoint -->
<path d="M917.500 82.500L928 72.200" stroke="#6b6b6b" stroke-width="1.200"/>
<path d="M929.300 70.900L942 58.500" stroke="#dc2a3c" stroke-width="1.200"/>
<path d="M917 64l6 6" stroke="#222" stroke-width="1.300"/>
<path d="M926 73l-5.600-1.600 4-4z" fill="#222"/>
<!-- symmetry -->
<path d="M964.800 61.500h-6.300v17.500h6.300" fill="none" stroke="#dc2a3c" stroke-width="1.200"/>
<path d="M974.200 61.500h6.300v17.500h-6.300" fill="none" stroke="#6b6b6b" stroke-width="1.200"/>
<path d="M969.500 58v25" stroke="#dc2a3c" stroke-width="1.200" stroke-dasharray="8 1.800 3 1.800"/>
<!-- curvature -->
<path d="M999 64c1.500 3.500 5 3.500 8.500 4s5.500 2.500 6 6 1 5.500 3 7" fill="none" stroke="#6b6b6b" stroke-width="1.100"/>
<path d="M1003 59l18.500 18" stroke="#dc2a3c" stroke-width="1.200"/>
<circle cx="1013" cy="68" r="1.500" fill="#c5102a"/>
<!-- configure 1 -->
<path d="M1052 56h21v25.500h-24.500v-22z" fill="#dadada"/>
<path d="M1066 77h12.500M1066 82h12.500" stroke="#b4c6d8" stroke-width="1.300"/>
<path d="M1070.500 74.500v5M1074 79.500v5" stroke="#b4c6d8" stroke-width="1.300"/>
<circle cx="1071.500" cy="62.600" r="7.600" fill="#1b88e2"/>
<path d="M1072 57.800l3.800 4.300h-2.500c-.2 2.300-1 3.900-2.700 5.200.3-1.800.2-3.400-.2-5.200h-2.500z" fill="#fff"/>
<!-- configure 2 -->
<rect x="1089.500" y="56" width="22.500" height="26" fill="#f2f2f2" stroke="#bdbdbd" stroke-width="1"/>
<rect x="1089.500" y="56" width="22.500" height="5.200" fill="#b5b5b5"/>
<rect x="1091.300" y="57.300" width="3.200" height="1.600" fill="#f2f2f2"/>
<path d="M1092 65h20M1092 70.300h20M1092 75.600h20M1092.500 65v15.500M1098.200 61.200v19.300M1104.400 61.200v19.300M1092 80.500h20" stroke="#bdbdbd" stroke-width="1" fill="none"/>
<path d="M1106 77h13M1106 82h13" stroke="#b4c6d8" stroke-width="1.300"/>
<path d="M1110.500 74.500v5M1114 79.500v5" stroke="#b4c6d8" stroke-width="1.300"/>
<circle cx="1111.500" cy="62.600" r="7.600" fill="#1b88e2"/>
<path d="M1112 57.800l3.800 4.300h-2.500c-.2 2.300-1 3.900-2.700 5.200.3-1.800.2-3.400-.2-5.200h-2.500z" fill="#fff"/>
<!-- inspect -->
<rect x="1159" y="72" width="27.200" height="6.200" fill="#f5a11a"/>
<path d="M1161.500 72v2.400M1164.500 72v2.400M1167.500 72v2.400M1170.500 72v2.400M1173.500 72v2.400M1176.500 72v2.400M1179.500 72v2.400M1182.500 72v2.400" stroke="#b56f00" stroke-width="0.800"/>
<path d="M1159.500 62.500v9.500M1185.700 62.500v9.500M1161 67h23" stroke="#555" stroke-width="1"/>
<path d="M1160.300 67l3.600-1.900v3.800zM1184.900 67l-3.600-1.900v3.800z" fill="#555"/>
<!-- insert bolt -->
<rect x="1224" y="56.500" width="23" height="7" rx="1.200" fill="#4aa3e2"/>
<rect x="1224" y="56.500" width="23" height="2.300" rx="1" fill="#79c0f0"/>
<path d="M1229 63.500h12v19.500l-1.500 1.500h-9l-1.500-1.500z" fill="#4aa3e2"/>
<path d="M1229 66.500h12M1229 69.300h12M1229 72.100h12M1229 74.900h12M1229 77.700h12M1229 80.500h12" stroke="#8cc9f2" stroke-width="0.900"/>
<path d="M1246.300 73v12M1240.300 79h12" stroke="#f5f5f5" stroke-width="5.200"/>
<path d="M1246.300 73.800v10.400M1241.100 79h10.400" stroke="#1da53a" stroke-width="3.200"/>
<!-- insert image -->
<rect x="1263.500" y="56" width="27.500" height="27" fill="#5bbdf6"/>
<path d="M1263.500 83v-8.500l7.800-7.700 7.700 9 5-4.500 7 6.500v5.200z" fill="#1b8dd6"/>
<circle cx="1283.200" cy="63.800" r="3" fill="#fbf7d5"/>
<!-- select -->
<rect x="1321.500" y="52.500" width="36.500" height="36" fill="#d3e9f8" stroke="#a9d4f2" stroke-width="1"/>
<rect x="1324.500" y="55.500" width="26.500" height="20" fill="none" stroke="#5aaa5a" stroke-width="1.100" stroke-dasharray="3.300 1.700"/>
<path d="M1344.500 69.500v13l3-2.700 2.300 5 2.200-1-2.300-4.800h4z" fill="#fff" stroke="#333" stroke-width="1" stroke-linejoin="round"/>
<!-- finish sketch -->
<circle cx="1435" cy="69.900" r="14.400" fill="#3bbf1d"/>
<path d="M1427.500 70.200l5.200 5.200 9.500-9.600" fill="none" stroke="#fff" stroke-width="3.600"/>
</svg>
<svg class="abs" style="left:95px;top:34px" width="100" height="76" viewBox="95 34 100 76"><ellipse cx="143" cy="71.300" rx="39.300" ry="29.600" fill="none" stroke="#e0291b" stroke-width="2.300" transform="rotate(-3 143 71.300)"/></svg>

</body>
</html>
